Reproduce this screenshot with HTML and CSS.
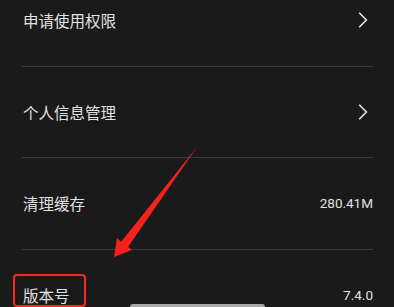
FILE: index.html
```html
<!DOCTYPE html>
<html lang="zh">
<head>
<meta charset="utf-8">
<link rel="stylesheet" href="styles.css">
</head>
<body>
<div class="screen">
  <ul class="list">
    <li class="row">
      <span class="label">申请使用权限</span>
      <svg class="chev" width="10" height="16" viewBox="0 0 10 16"><path d="M1.2 0.8 L8.4 8 L1.2 15.2" fill="none" stroke="#e6e6e6" stroke-width="1.6"/></svg>
    </li>
    <li class="row">
      <span class="label">个人信息管理</span>
      <svg class="chev" width="10" height="16" viewBox="0 0 10 16"><path d="M1.2 0.8 L8.4 8 L1.2 15.2" fill="none" stroke="#e6e6e6" stroke-width="1.6"/></svg>
    </li>
    <li class="row">
      <span class="label">清理缓存</span>
      <span class="value">280.41M</span>
    </li>
    <li class="row">
      <span class="label">版本号</span>
      <span class="value">7.4.0</span>
    </li>
  </ul>
  <div class="highlight"></div>
  <svg class="arrow" width="394" height="307" viewBox="0 0 394 307">
    <polygon points="197,147 128,247 132,250 114,257 117,238 121,242" fill="#f5221b"/>
  </svg>
  <div class="home-bar"></div>
</div>
</body>
</html>
```

FILE: styles.css
```css
* { box-sizing: border-box; }
html, body {
  margin: 0;
  padding: 0;
  background: #1a1a1a;
}
.screen {
  position: relative;
  width: 394px;
  height: 307px;
  overflow: hidden;
  background: #1a1a1a;
  font-family: "Noto Sans CJK SC", Roboto, sans-serif;
  color: #e2e2e2;
}
.list {
  list-style: none;
  margin: -25px 21px 0 22px;
  padding: 0;
}
.row {
  display: flex;
  align-items: center;
  justify-content: space-between;
  height: 91.5px;
  border-bottom: 1px solid #3a3a3a;
  padding: 0 0 0 1px;
}
.label {
  font-size: 15.5px;
  line-height: 20px;
}
.value {
  font-family: Roboto, "Noto Sans CJK SC", sans-serif;
  font-size: 13.5px;
  line-height: 20px;
  color: #e2e2e2;
}
.chev {
  display: block;
  margin-right: 5px;
}
.highlight {
  position: absolute;
  left: 13px;
  top: 274px;
  width: 73px;
  height: 33px;
  border: 2px solid #f52a1e;
  border-radius: 4px;
}
.arrow {
  position: absolute;
  left: 0;
  top: 0;
}
.home-bar {
  position: absolute;
  left: 130px;
  top: 304px;
  width: 135px;
  height: 8px;
  border-radius: 3px;
  background: #a8a8a8;
}
```
